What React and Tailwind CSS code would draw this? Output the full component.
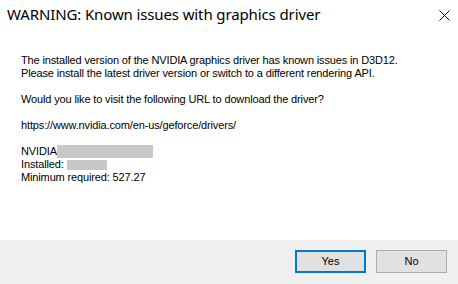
export default function App() {
  const body = { fontFamily: '"Liberation Sans", Arial, sans-serif' };
  return (
    <div className="w-[458px] h-[284px] bg-white flex flex-col overflow-hidden text-black">
      <div className="h-[29px] flex items-center justify-between pl-[7px] pr-[8px]">
        <span className="text-[15px] leading-none tracking-[-0.12px]" style={{ fontFamily: '"Noto Sans", sans-serif' }}>
          WARNING: Known issues with graphics driver
        </span>
        <svg width="11" height="11" viewBox="0 0 11 11" className="mt-[1px]">
          <path d="M0.5 0.5 L10.5 10.5 M10.5 0.5 L0.5 10.5" stroke="#000" strokeWidth="1" />
        </svg>
      </div>
      <div className="flex-1 pl-[21px] pt-[25px] text-[11px] leading-[13px] tracking-[-0.14px]" style={body}>
        <div>The installed version of the NVIDIA graphics driver has known issues in D3D12.</div>
        <div>Please install the latest driver version or switch to a different rendering API.</div>
        <div className="h-[13px]" />
        <div>Would you like to visit the following URL to download the driver?</div>
        <div className="h-[13px]" />
        <div>https://www.nvidia.com/en-us/geforce/drivers/</div>
        <div className="h-[13px]" />
        <div className="flex items-center">
          <span>NVIDIA</span>
          <span className="inline-block w-[96px] h-[13px] bg-[#c8c8c8]" />
        </div>
        <div className="flex items-center">
          <span>Installed:&nbsp;</span>
          <span className="inline-block w-[40px] h-[10px] bg-[#c8c8c8]" />
        </div>
        <div>Minimum required: 527.27</div>
      </div>
      <div className="h-[44px] bg-[#f0f0f0] flex items-start justify-end pt-[10px] pr-[11px] gap-[10px]">
        <button className="w-[71px] h-[23px] bg-[#e1e1e1] border-2 border-[#0078d7] text-[11px] flex items-center justify-center" style={body}>
          Yes
        </button>
        <button className="w-[71px] h-[23px] bg-[#e1e1e1] border border-[#adadad] text-[11px] flex items-center justify-center" style={body}>
          No
        </button>
      </div>
    </div>
  );
}
